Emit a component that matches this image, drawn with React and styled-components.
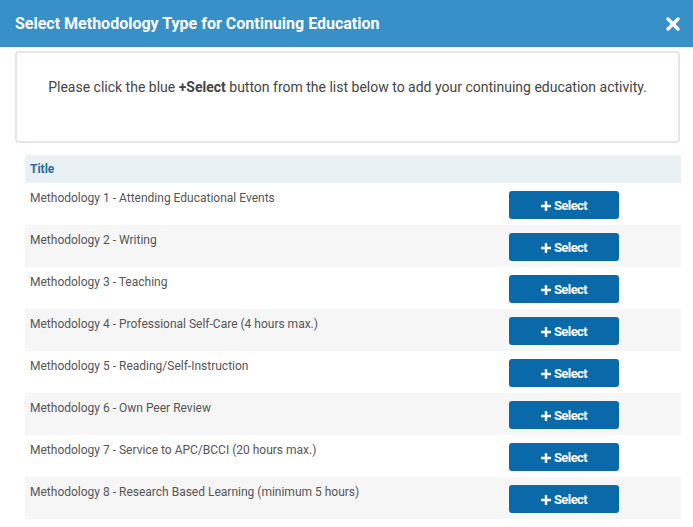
import React from "react";
import styled, { createGlobalStyle } from "styled-components";

const Global = createGlobalStyle`
  html, body { margin: 0; padding: 0; background: #ffffff; }
  body { font-family: Roboto, "Liberation Sans", sans-serif; }
  * { box-sizing: border-box; }
`;

const Modal = styled.div`
  width: 693px;
  height: 527px;
  background: #ffffff;
  overflow: hidden;
`;

const Header = styled.div`
  height: 47px;
  background: #3790c7;
  display: flex;
  align-items: center;
  justify-content: space-between;
  padding: 0 12px 0 15px;
`;

const HeaderTitle = styled.h1`
  margin: 0;
  font-size: 16px;
  font-weight: 700;
  color: #ffffff;
  letter-spacing: 0;
`;

const CloseButton = styled.button`
  border: 0;
  background: transparent;
  padding: 0;
  width: 16px;
  height: 16px;
  display: flex;
  align-items: center;
  justify-content: center;
  cursor: pointer;
`;

const Body = styled.div`
  padding: 4px 13px 0 15px;
`;

const InfoBox = styled.div`
  height: 92px;
  border: 2px solid #e6e6e6;
  border-radius: 4px;
  padding-top: 24px;
  text-align: center;
  font-size: 14px;
  line-height: 20px;
  color: #444444;
`;

const Table = styled.div`
  margin: 12px 0 0 10px;
  width: 656px;
`;

const Row = styled.div`
  display: grid;
  grid-template-columns: 484px 1fr;
  height: ${(p) => (p.$head ? 28 : 42)}px;
  background: ${(p) => (p.$head ? "#e9f1f5" : p.$alt ? "#f6f6f6" : "#ffffff")};
  align-items: ${(p) => (p.$head ? "center" : "start")};
`;

const HeadCell = styled.div`
  padding-left: 5px;
  font-size: 12px;
  font-weight: 700;
  color: #2b6aa3;
`;

const Cell = styled.div`
  padding: 7px 0 0 5px;
  font-size: 12px;
  line-height: 17px;
  color: #555555;
`;

const SelectButton = styled.button`
  margin-top: 8px;
  width: 110px;
  height: 28px;
  border: 0;
  border-radius: 3px;
  background: #0a69a8;
  color: #ffffff;
  font-family: Roboto, "Liberation Sans", sans-serif;
  font-size: 13px;
  font-weight: 700;
  letter-spacing: -0.6px;
  display: flex;
  align-items: center;
  justify-content: center;
  gap: 3px;
  cursor: pointer;
  padding: 1px 0 0 0;
`;

const items = [
  "Methodology 1 - Attending Educational Events",
  "Methodology 2 - Writing",
  "Methodology 3 - Teaching",
  "Methodology 4 - Professional Self-Care (4 hours max.)",
  "Methodology 5 - Reading/Self-Instruction",
  "Methodology 6 - Own Peer Review",
  "Methodology 7 - Service to APC/BCCI (20 hours max.)",
  "Methodology 8 - Research Based Learning (minimum 5 hours)",
];

const Plus = () => (
  <svg width="10" height="10" viewBox="0 0 10 10">
    <path d="M5 0v10M0 5h10" stroke="#fff" strokeWidth="2.4" />
  </svg>
);

export default function App() {
  return (
    <>
      <Global />
      <Modal>
        <Header>
          <HeaderTitle>Select Methodology Type for Continuing Education</HeaderTitle>
          <CloseButton aria-label="Close">
            <svg width="14" height="14" viewBox="0 0 14 14">
              <path d="M2 2L12 12M12 2L2 12" stroke="#fff" strokeWidth="3.4" strokeLinecap="round" />
            </svg>
          </CloseButton>
        </Header>
        <Body>
          <InfoBox>
            Please click the blue <b>+Select</b> button from the list below to add your continuing education activity.
          </InfoBox>
          <Table>
            <Row $head>
              <HeadCell>Title</HeadCell>
              <div />
            </Row>
            {items.map((t, i) => (
              <Row key={t} $alt={i % 2 === 1}>
                <Cell>{t}</Cell>
                <div>
                  <SelectButton>
                    <Plus />
                    Select
                  </SelectButton>
                </div>
              </Row>
            ))}
          </Table>
        </Body>
      </Modal>
    </>
  );
}
